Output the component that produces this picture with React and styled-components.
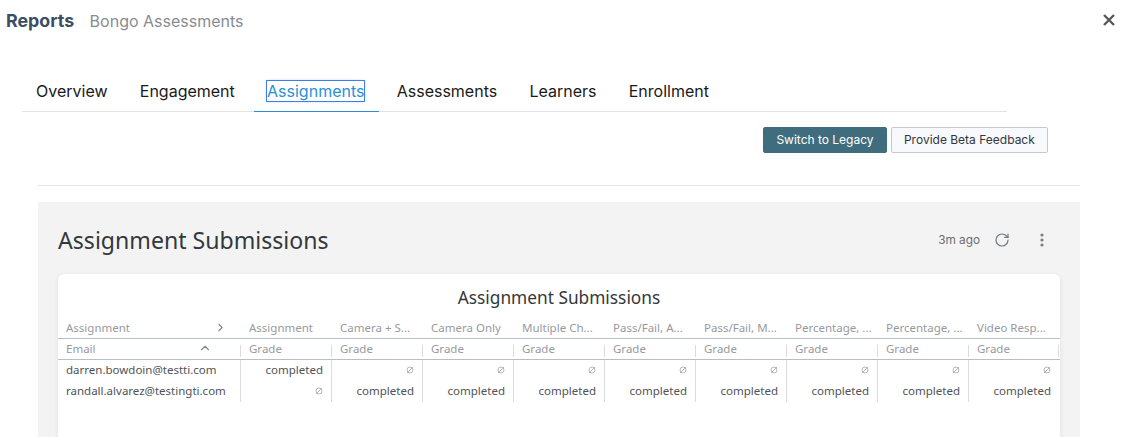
import * as React from 'react'
import styled, {createGlobalStyle} from 'styled-components'
import {ChevronRight, ChevronUp, RotateCw} from 'lucide-react'

const GlobalStyle = createGlobalStyle`
  html, body {
    margin: 0;
    padding: 0;
    background: #fff;
    font-family: Inter, "Liberation Sans", sans-serif;
    overflow: hidden;
  }
`

const Page = styled.div`
  width: 1124px;
  height: 437px;
  overflow: hidden;
`

const Header = styled.header`
  display: flex;
  align-items: center;
  height: 40px;
  padding: 0 7px 0 6px;
`

const Heading = styled.h1`
  margin: 0;
  font-size: 17.8px;
  font-weight: 700;
  color: #3a4f63;
`

const SubHeading = styled.span`
  margin-left: 15.5px;
  font-size: 16px;
  color: #898c8f;
  flex: 1;
  padding-top: 2px;
`

const CloseButton = styled.svg`
  width: 16px;
  height: 16px;
  color: #55595d;
`

const Tabs = styled.nav`
  display: flex;
  gap: 6.25px;
  margin: 31px 117px 0 22px;
  padding-left: 1px;
  height: 40px;
  border-bottom: 1px solid #e3e3e3;
`

const Tab = styled.div`
  padding: 0 ${p => (p.$active ? 14.5 : 13)}px 1px 13px;
  margin-right: ${p => (p.$active ? -1.5 : 0)}px;
  display: flex;
  align-items: center;
  font-size: 16px;
  color: ${p => (p.$active ? '#2a8fd6' : '#1a1a1a')};
  border-bottom: ${p => (p.$active ? '1px solid #2a8fd6' : 'none')};
  box-sizing: border-box;
  margin-bottom: -1px;
  height: 41px;

  span {
    outline: ${p => (p.$active ? '1.5px solid #3c7fe6' : 'none')};
    box-shadow: ${p => (p.$active ? '0 0 3px #8db7f2' : 'none')};
  }
`

const Actions = styled.div`
  display: flex;
  justify-content: flex-end;
  gap: 4px;
  margin: 15px 76px 0 0;
`

const Button = styled.button`
  height: 26px;
  padding: 0 12.2px 1px;
  font-family: Inter, "Liberation Sans", sans-serif;
  font-size: 12px;
  border-radius: 2px;
  background: ${p => (p.$primary ? '#3f6d7e' : '#f8f9fc')};
  color: ${p => (p.$primary ? '#fff' : '#33363a')};
  border: 1px solid ${p => (p.$primary ? '#3f6d7e' : '#c9c9cd')};
`

const Divider = styled.hr`
  margin: 32px 44px 0 38px;
  border: 0;
  border-top: 1px solid #e4e4e4;
`

const Panel = styled.section`
  margin: 16px 44px 0 38px;
  height: 300px;
  background: #f3f3f3;
  padding: 0 20px;
`

const PanelHeader = styled.div`
  display: flex;
  align-items: center;
  height: 72px;
  padding-top: 4px;
  box-sizing: border-box;
`

const PanelTitle = styled.h2`
  margin: 0;
  flex: 1;
  font-family: "Noto Sans", sans-serif;
  font-size: 23.1px;
  font-weight: 400;
  color: #34383b;
`

const Ago = styled.span`
  font-size: 11.8px;
  color: #6b6e71;
  margin-right: 14px;
`

const Dots = styled.svg`
  width: 4px;
  height: 14px;
  margin: 0 16px 0 30px;
  color: #7b7e81;
`

const Card = styled.div`
  background: #fff;
  border-radius: 6px;
  box-shadow: 0 1px 5px rgba(0, 0, 0, 0.08);
  height: 200px;
`

const CardTitle = styled.h3`
  margin: 0;
  padding-top: 12px;
  height: 31px;
  box-sizing: content-box;
  text-align: center;
  font-family: "Noto Sans", sans-serif;
  font-size: 17.3px;
  line-height: 23px;
  font-weight: 400;
  color: #34383b;
`

const Row = styled.div`
  display: grid;
  grid-template-columns: 182px repeat(9, 91px);
  height: ${p => p.$height || 21}px;
  border-bottom: ${p => (p.$line ? '1px solid #b9bdc4' : 'none')};
  font-family: "Noto Sans", sans-serif;
`

const HeadCell = styled.div`
  display: flex;
  align-items: center;
  justify-content: space-between;
  padding: 0 8px 0 ${p => (p.$first ? 8 : 9)}px;
  font-size: 11.5px;
  color: #979a9e;
  white-space: nowrap;
  overflow: hidden;
`

const GradeCell = styled(HeadCell)`
  position: relative;
  padding-bottom: 2px;

  &::before {
    content: '';
    position: absolute;
    left: 0;
    top: 6px;
    bottom: 2px;
    border-left: 1px solid #dcdcdc;
  }

  &:last-child::after {
    content: '';
    position: absolute;
    right: 0;
    top: 6px;
    bottom: 2px;
    border-right: 1px solid #dcdcdc;
  }
`

const EmailHead = styled(HeadCell)`
  padding-bottom: 2px;
`

const EmailCell = styled.div`
  padding: 0 8px;
  font-size: 11.5px;
  line-height: 20px;
  color: #505356;
  white-space: nowrap;
`

const ValueCell = styled.div`
  display: flex;
  align-items: center;
  justify-content: flex-end;
  padding: 0 8px 2px;
  font-size: 11.5px;
  color: #505356;
  border-left: 1px solid #dcdcdc;
`

const NullMark = styled.svg`
  width: 8px;
  height: 8px;
  color: #a5a7aa;
`

const ChevronSlot = styled.span`
  display: flex;
  color: #85888c;
  margin-right: ${p => p.$right}px;
`

const tabs = ['Overview', 'Engagement', 'Assignments', 'Assessments', 'Learners', 'Enrollment']
const columns = ['Assignment', 'Camera + S...', 'Camera Only', 'Multiple Ch...', 'Pass/Fail, A...', 'Pass/Fail, M...', 'Percentage, ...', 'Percentage, ...', 'Video Resp...']

const rows = [
  {email: 'darren.bowdoin@testti.com'},
  {email: 'randall.alvarez@testingti.com'},
]

function Null() {
  return (
    <NullMark viewBox="0 0 8 8" fill="none" stroke="currentColor" strokeWidth="0.8">
      <circle cx="4" cy="4" r="3" />
      <path d="M1 7L7 1" />
    </NullMark>
  )
}

export default function App() {
  return (
    <Page>
      <GlobalStyle />
      <Header>
        <Heading>Reports</Heading>
        <SubHeading>Bongo Assessments</SubHeading>
        <CloseButton viewBox="0 0 16 16" fill="none" stroke="currentColor" strokeWidth="2.4">
          <path d="M3 3L13 13M13 3L3 13" />
        </CloseButton>
      </Header>
      <Tabs>
        {tabs.map(tab => (
          <Tab key={tab} $active={tab === 'Assignments'}><span>{tab}</span></Tab>
        ))}
      </Tabs>
      <Actions>
        <Button $primary>Switch to Legacy</Button>
        <Button>Provide Beta Feedback</Button>
      </Actions>
      <Divider />
      <Panel>
        <PanelHeader>
          <PanelTitle>Assignment Submissions</PanelTitle>
          <Ago>3m ago</Ago>
          <RotateCw size={16} color="#75787b" strokeWidth={1.8} />
          <Dots viewBox="0 0 4 14" fill="currentColor">
            <circle cx="2" cy="2" r="1.6" />
            <circle cx="2" cy="7" r="1.6" />
            <circle cx="2" cy="12" r="1.6" />
          </Dots>
        </PanelHeader>
        <Card>
          <CardTitle>Assignment Submissions</CardTitle>
          <Row $line>
            <HeadCell $first>Assignment<ChevronSlot $right={5}><ChevronRight size={13} /></ChevronSlot></HeadCell>
            {columns.map((col, i) => <HeadCell key={i}>{col}</HeadCell>)}
          </Row>
          <Row $line $height={20}>
            <EmailHead $first>Email<ChevronSlot $right={20}><ChevronUp size={14} /></ChevronSlot></EmailHead>
            {columns.map((col, i) => <GradeCell key={i}>Grade</GradeCell>)}
          </Row>
          {rows.map((row, r) => (
            <Row key={row.email}>
              <EmailCell>{row.email}</EmailCell>
              {columns.map((col, i) => (
                <ValueCell key={i}>{(r === 0 ? i === 0 : i > 0) ? 'completed' : <Null />}</ValueCell>
              ))}
            </Row>
          ))}
        </Card>
      </Panel>
    </Page>
  )
}
